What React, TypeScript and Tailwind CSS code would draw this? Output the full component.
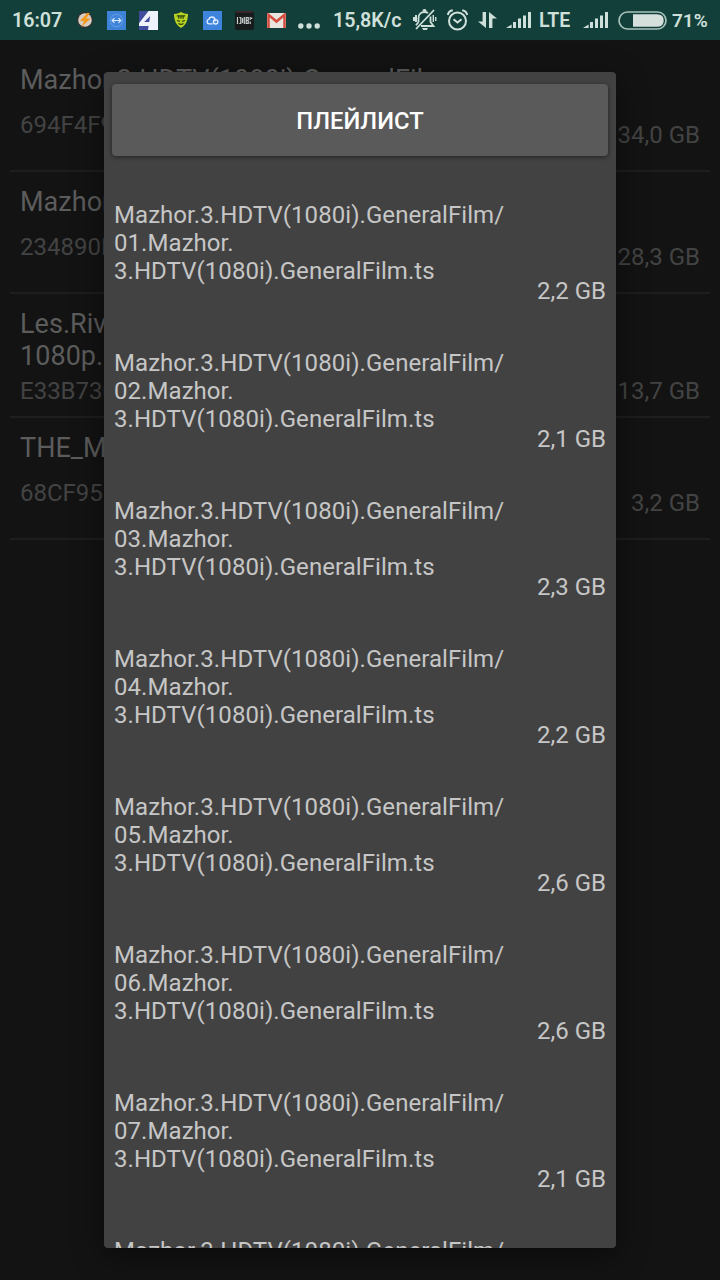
const torrents = [
  { title: ['Mazhor.3.HDTV(1080i).GeneralFilm'], hash: '694F4F9', size: '34,0 GB' },
  { title: ['Mazhor'], hash: '234890D', size: '28,3 GB' },
  { title: ['Les.Riv', '1080p.'], hash: 'E33B730', size: '13,7 GB' },
  { title: ['THE_M'], hash: '68CF95', size: '3,2 GB' },
];

const files = [
  { n: '01', size: '2,2 GB' },
  { n: '02', size: '2,1 GB' },
  { n: '03', size: '2,3 GB' },
  { n: '04', size: '2,2 GB' },
  { n: '05', size: '2,6 GB' },
  { n: '06', size: '2,6 GB' },
  { n: '07', size: '2,1 GB' },
];

function Signal({ className }: { className: string }) {
  return (
    <svg className={`h-[18px] w-[26px] shrink-0 ${className}`} viewBox="0 0 26 18" fill="#cfe0db">
      <path d="M0 17L5.6 13.4V17Z" />
      <rect x="7" y="11" width="3" height="6" />
      <rect x="12" y="7.5" width="3" height="9.5" />
      <rect x="17" y="4.5" width="3" height="12.5" />
      <rect x="22" y="1" width="3" height="16" />
    </svg>
  );
}

function StatusBar() {
  return (
    <header className="flex h-10 w-full items-center bg-[#133f3a] pl-3 text-[20px] leading-10 font-semibold whitespace-nowrap text-[#cfe0db]">
      <span className="w-[65px] shrink-0 pt-px text-[19.7px]">16:07</span>
      <svg className="h-4 w-4 shrink-0" viewBox="0 0 16 16">
        <circle cx="8" cy="8" r="7.9" fill="#382f2b" />
        <circle cx="8" cy="8" r="6.8" fill="#d6cdc4" />
        <path d="M10.6 .8L3 8.8L7 9.3L4.4 15L13.4 6.8L9.3 6.3L12.8 1.2Z" fill="#f39a1d" />
      </svg>
      <svg className="ml-[14px] h-[19px] w-[19px] shrink-0" viewBox="0 0 19 19" fill="none">
        <rect width="19" height="19" fill="#3f83d8" />
        <circle cx="9.5" cy="9.5" r="6.2" stroke="#6ea8ea" strokeWidth="0.8" />
        <path d="M5.5 9.5H13.5M7.5 7.2L5.2 9.5L7.5 11.8M11.5 7.2L13.8 9.5L11.5 11.8" stroke="#dcecff" strokeWidth="1.2" />
      </svg>
      <svg className="ml-[13px] h-[19px] w-[19px] shrink-0" viewBox="0 0 19 19">
        <rect width="19" height="19" fill="#414c9c" />
        <path d="M9.5 0H19V19H9L9.6 15H0V12.2ZM5.2 11H10.2L11.2 5Z" fill="#f0f2fb" fillRule="evenodd" />
      </svg>
      <svg className="ml-[16px] h-[16px] w-[14px] shrink-0" viewBox="0 0 14 16">
        <path d="M0 2Q4 2 7 0Q10 2 14 2Q14.2 12 7 16Q-.2 12 0 2Z" fill="#b7d221" />
        <path d="M2.8 3.8H11.2M4.8 3.8V6.8M7 3.8V6.8M9.2 3.8V6.8M3 8.5L6 9.3M11 8.5L8 9.3M4.5 11.5Q7 13.2 9.5 11.5" stroke="#2c4411" strokeWidth="1.25" fill="none" />
      </svg>
      <svg className="ml-[15px] h-[19px] w-[19px] shrink-0" viewBox="0 0 19 19" fill="none">
        <rect width="19" height="19" fill="#3e83dc" />
        <path d="M9.8 12.9H6A2.3 2.3 0 0 1 5.8 8.4A3.3 3.3 0 0 1 12 8V10.5" stroke="#e2efff" strokeWidth="1.4" />
        <circle cx="12.6" cy="10.8" r="2.2" stroke="#e2efff" strokeWidth="1.3" />
      </svg>
      <svg className="ml-[13px] h-[19px] w-[19px] shrink-0" viewBox="0 0 19 19" fill="none">
        <rect width="19" height="19" rx="2" fill="#171b1b" />
        <path d="M1 0H18V2H1Z" fill="#3b2528" />
        <path d="M2.5 6V13M4.3 6.5H5.8V12.5H4.3M7.5 7V12M9.3 6V13M11.2 6.5H13.2V12.5H11.2ZM11.2 9.5H13.2M15.2 6V9M15.2 10.5V13M16.7 6.5V8" stroke="#c8cfcd" strokeWidth="1.2" />
      </svg>
      <svg className="ml-[13px] h-[15px] w-[19px] shrink-0" viewBox="0 0 19 15" fill="none">
        <rect width="19" height="15" rx="1.3" fill="#e8e5de" />
        <path d="M1.5 15V1.8L9.5 8.5L17.5 1.8V15" stroke="#d44b3f" strokeWidth="2.5" />
      </svg>
      <svg className="mt-[11px] ml-3 h-[6px] w-[22px] shrink-0" viewBox="0 0 22 6" fill="#cfe0db">
        <circle cx="2.8" cy="3" r="2.7" />
        <circle cx="11" cy="3" r="2.7" />
        <circle cx="19.2" cy="3" r="2.7" />
      </svg>
      <span className="ml-[13px] w-[69px] shrink-0 pt-px text-[19.7px]">15,8K/c</span>
      <svg className="ml-[11px] h-[22px] w-6 shrink-0" viewBox="0 0 24 22" fill="none" stroke="#cfe0db" strokeWidth="1.8">
        <path d="M5.5 13V9C5.5 5.5 8 3 11.5 3C13 3 14 3.3 15 4M17.5 7.5V13L20.5 17H8M5.5 13L3 16.3" />
        <path d="M3 20L21 1" />
        <path d="M3 6V13M1 8V12" strokeWidth="2" />
        <path d="M20.3 6V13M22.7 8V12" strokeWidth="1.4" />
        <path d="M9 19H15L13.8 21H10.2Z" fill="#cfe0db" stroke="none" />
        <path d="M10 2Q11.5 0 13 2" />
      </svg>
      <svg className="ml-[10px] h-[22px] w-[22px] shrink-0" viewBox="0 0 22 22" fill="none" stroke="#cfe0db" strokeWidth="2">
        <circle cx="10.5" cy="12" r="8.5" />
        <path d="M.8 6Q1.5 2 5.8 1.2M15.2 1.2Q19.5 2 20.2 6" />
        <path d="M6.5 10.2L10.5 13.5L14.5 10.2" />
      </svg>
      <svg className="ml-[9px] h-[18px] w-[19px] shrink-0" viewBox="0 0 19 18" fill="#cfe0db">
        <path d="M4.6 1H8V17L0 10.5H4.6ZM11 1L19 7.5H14.4V17H11Z" />
      </svg>
      <Signal className="ml-[9px]" />
      <span className="ml-[7px] w-[36px] shrink-0 pt-px text-[19.5px]">LTE</span>
      <Signal className="ml-[8px]" />
      <svg className="ml-[9px] h-[19px] w-[49px] shrink-0" viewBox="0 0 49 19" fill="none">
        <rect x="1" y="1" width="47" height="17" rx="8.5" stroke="#a8c2bc" strokeWidth="1.7" />
        <path d="M15 3.2H39Q45.7 3.2 45.7 9.5Q45.7 15.8 39 15.8H15Z" fill="#d5dfdc" />
      </svg>
      <span className="ml-[5px] shrink-0 pt-px text-[19px]">71%</span>
    </header>
  );
}

export default function App() {
  return (
    <div className="relative h-[1280px] w-[720px] overflow-hidden bg-[#131313] font-['Roboto',sans-serif]">
      <StatusBar />
      <main className="flex flex-col px-[10px] pt-[10px]">
        {torrents.map((t) => {
          const tall = t.title.length > 1;
          return (
            <article key={t.hash} className={`flex justify-between border-b-2 border-[#1e1e1e] px-[10px] ${tall ? 'h-[124px]' : 'h-[122px]'}`}>
              <div className="pt-[14px]">
                {t.title.map((line) => (
                  <h2 key={line} className="text-[27px] leading-8 tracking-[0.04px] whitespace-nowrap text-[#5c5c5c]">{line}</h2>
                ))}
                <p className={`text-[24px] leading-7 text-[#434343] ${tall ? 'mt-[5px]' : 'mt-[15px]'}`}>{t.hash}</p>
              </div>
              <span className={`self-end text-[24px] leading-7 whitespace-nowrap text-[#434343] ${tall ? 'pb-[11px]' : 'pb-[21px]'}`}>{t.size}</span>
            </article>
          );
        })}
      </main>

      <section
        role="dialog"
        className="absolute top-[72px] left-[104px] flex h-[1176px] w-[512px] flex-col overflow-hidden rounded-[4px] bg-[#424242] pt-3 shadow-[0_8px_32px_rgba(0,0,0,0.45)]"
      >
        <button className="mx-2 h-[72px] shrink-0 rounded-[4px] bg-[#5a5a5a] pt-[3px] text-[23.8px] font-medium text-white shadow-[0_1px_4px_rgba(0,0,0,0.5)]">
          ПЛЕЙЛИСТ
        </button>
        <ul className="mt-[13px] flex flex-col">
          {files.map((f) => (
            <li key={f.n} className="flex h-[148px] shrink-0 items-center justify-between px-[10px] text-[24px] leading-7 whitespace-nowrap text-[#c6c6c6]">
              <p className="tracking-[0.06px]">
                Mazhor.3.HDTV(1080i).GeneralFilm/
                <br />
                {f.n}.Mazhor.
                <br />
                3.HDTV(1080i).GeneralFilm.ts
              </p>
              <span className="self-end pb-3">{f.size}</span>
            </li>
          ))}
          <li className="h-[43px] shrink-0 px-[10px] pt-[32px] text-[24px] leading-7 tracking-[0.06px] whitespace-nowrap text-[#c6c6c6]">
            Mazhor.3.HDTV(1080i).GeneralFilm/
          </li>
        </ul>
      </section>
    </div>
  );
}
